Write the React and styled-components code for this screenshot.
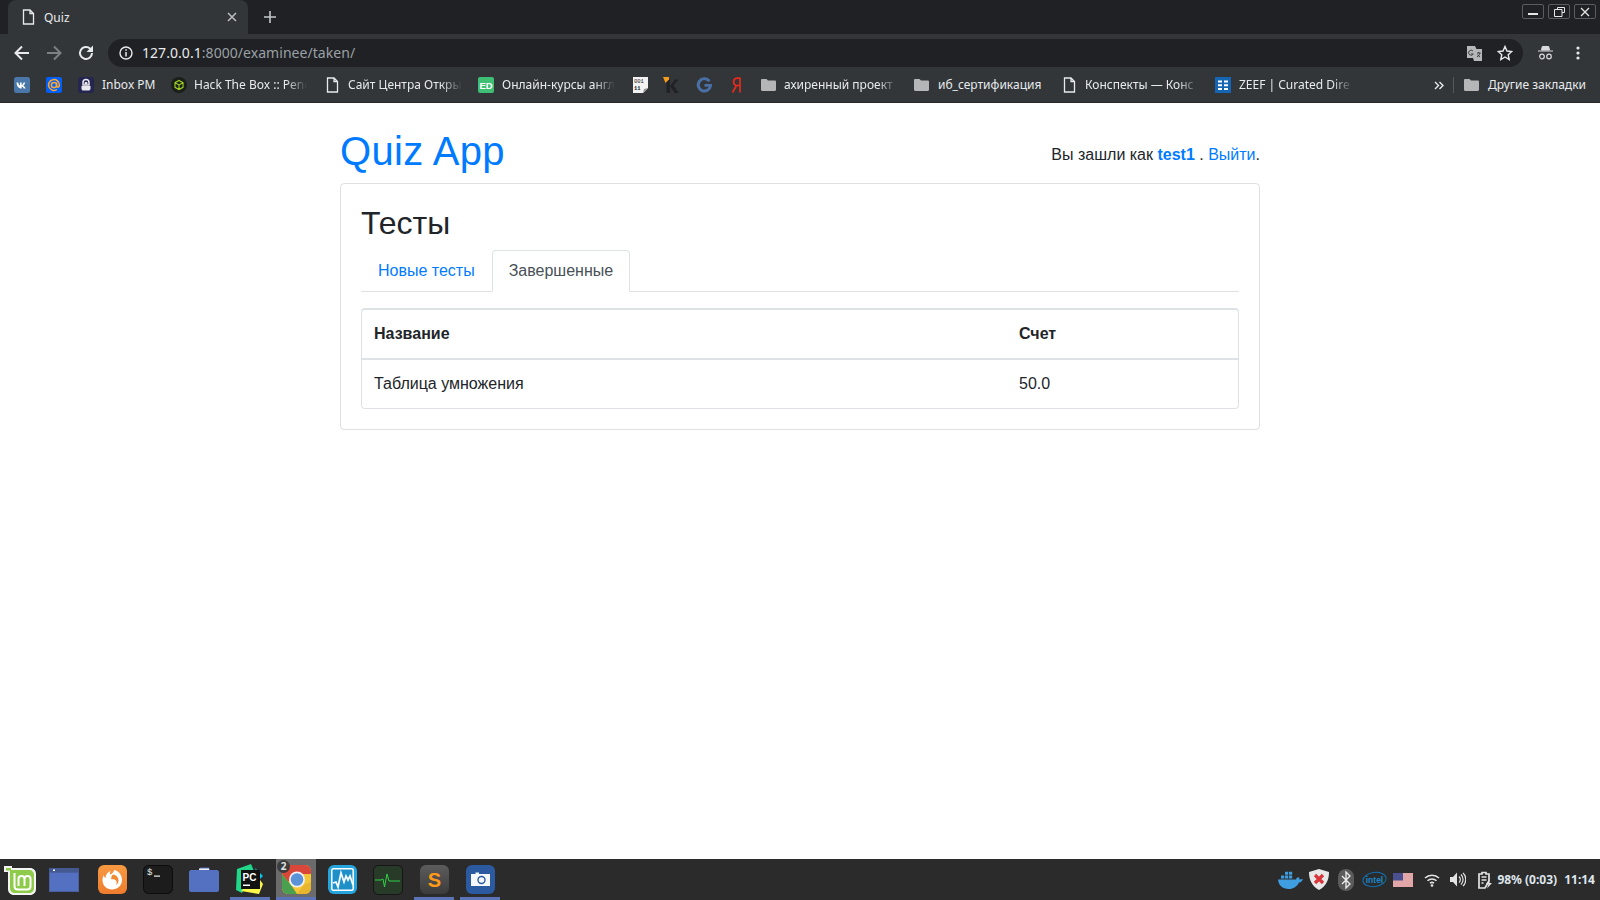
import React from "react";
import styled, { createGlobalStyle } from "styled-components";

const Global = createGlobalStyle`
  html, body { margin: 0; padding: 0; height: 100%; background: #fff; }
  #root { height: 100%; }
`;

const uiFont = `"Noto Sans", "Open Sans", sans-serif`;

const Screen = styled.div`
  width: 1600px;
  height: 900px;
  display: flex;
  flex-direction: column;
  overflow: hidden;
  font-family: "Liberation Sans", Arial, sans-serif;
`;

/* browser chrome */
const TabStrip = styled.div`
  height: 34px;
  background: #202124;
  display: flex;
  align-items: flex-end;
  padding-left: 8px;
  flex: none;
`;

const Tab = styled.div`
  width: 240px;
  height: 34px;
  box-sizing: border-box;
  background: #323639;
  border-radius: 8px 8px 0 0;
  display: flex;
  align-items: center;
  padding: 0 11px 0 14px;
  color: #e8eaed;
  font: 12px ${uiFont};
`;

const TabTitle = styled.span`
  flex: 1;
  margin-left: 9px;
`;

const NewTab = styled.div`
  margin: 0 0 1px 16px;
  height: 32px;
  display: flex;
  align-items: center;
`;

const WindowButtons = styled.div`
  margin-left: auto;
  display: flex;
  gap: 4px;
  padding: 4px 4px 0 0;
  align-self: flex-start;
`;

const WinBtn = styled.div`
  width: 22px;
  height: 15px;
  box-sizing: border-box;
  border: 1px solid #5a5d60;
  border-radius: 2px;
  display: flex;
  align-items: center;
  justify-content: center;
`;

const Toolbar = styled.div`
  height: 34px;
  flex: none;
  box-sizing: border-box;
  background: #323639;
  display: flex;
  align-items: center;
  padding: 5px 0 1px 13px;
`;

const NavIcon = styled.div`
  width: 18px;
  height: 18px;
  margin-right: 14px;
  display: flex;
`;

const Omnibox = styled.div`
  width: 1415px;
  margin-left: -1px;
  height: 28px;
  box-sizing: border-box;
  border-radius: 14px;
  background: #202124;
  display: flex;
  align-items: center;
  padding: 0 10px 0 11px;
  font: 14px ${uiFont};
  color: #9aa0a6;
`;

const Url = styled.span`
  margin: -2px 0 0 9px;
  letter-spacing: 0.05px;
`;

const UrlHost = styled.span`
  color: #e8eaed;
`;

const OmniEnd = styled.div`
  margin-left: auto;
  display: flex;
  gap: 15px;
  align-items: center;
`;

const ToolEnd = styled.div`
  display: flex;
  align-items: center;
  gap: 23px;
  margin-left: 15px;
`;

const Bookmarks = styled.div`
  height: 35px;
  flex: none;
  background: #323639;
  border-bottom: 1px solid #26282a;
  box-sizing: border-box;
  display: flex;
  align-items: center;
  padding-left: 14px;
  font: 12px ${uiFont};
  color: #e8eaed;
  svg {
    flex: none;
  }
`;

const Mark = styled.div`
  flex: none;
  width: ${(p) => p.$w}px;
  display: flex;
  align-items: center;
  white-space: nowrap;
`;

const MarkLabel = styled.span`
  flex: none;
  margin: -2px 0 0 ${(p) => p.$gap}px;
  width: ${(p) => p.$tw}px;
  ${(p) =>
    p.$fade &&
    `-webkit-mask-image: linear-gradient(to right, #000 82%, transparent 100%);`}
`;

const MarkDivider = styled.div`
  width: 1px;
  height: 16px;
  background: #55585b;
  margin: 0 10px 0 9px;
`;

/* page */
const Page = styled.main`
  flex: 1;
  background: #fff;
  color: #212529;
  font-size: 16px;
  line-height: 24px;
`;

const Container = styled.div`
  width: 920px;
  margin: 0 auto;
`;

const Header = styled.header`
  display: flex;
  justify-content: space-between;
  align-items: center;
  padding-top: 24px;
  margin-bottom: 8px;
`;

const Brand = styled.a`
  font-size: 40px;
  line-height: 48px;
  letter-spacing: 0.3px;
  color: #007bff;
  text-decoration: none;
`;

const Who = styled.div`
  padding-top: 8px;
`;

const Link = styled.a`
  color: #007bff;
  text-decoration: none;
  font-weight: ${(p) => (p.$bold ? 700 : 400)};
`;

const Card = styled.section`
  border: 1px solid rgba(0, 0, 0, 0.125);
  border-radius: 4px;
  padding: 20px;
`;

const CardTitle = styled.h2`
  margin: 0 0 8px;
  font-size: 32px;
  line-height: 38.4px;
  font-weight: 500;
`;

const Tabs = styled.nav`
  display: flex;
  border-bottom: 1px solid #dee2e6;
  height: 42px;
  box-sizing: border-box;
`;

const TabLink = styled.a`
  padding: 8px 16px;
  height: 42px;
  box-sizing: border-box;
  border: 1px solid ${(p) => (p.$active ? "#dee2e6" : "transparent")};
  border-bottom-color: ${(p) => (p.$active ? "#fff" : "transparent")};
  border-radius: 4px 4px 0 0;
  color: ${(p) => (p.$active ? "#495057" : "#007bff")};
  background: ${(p) => (p.$active ? "#fff" : "transparent")};
  text-decoration: none;
`;

const TableWrap = styled.div`
  margin-top: 16px;
  border: 1px solid #dee2e6;
  border-top-width: 2px;
  border-radius: 4px;
`;

const Table = styled.table`
  width: 100%;
  border-collapse: collapse;
  table-layout: fixed;
`;

const Th = styled.th`
  text-align: left;
  padding: 12px;
  border-bottom: 2px solid #dee2e6;
  width: ${(p) => p.$w || "auto"};
`;

const Td = styled.td`
  padding: 12px;
`;

/* desktop panel */
const Panel = styled.footer`
  height: 41px;
  flex: none;
  background: #2b2b2b;
  display: flex;
  align-items: stretch;
`;

const Launcher = styled.div`
  flex: none;
  width: 40px;
  margin-right: ${(p) => p.$mr ?? 6}px;
  display: flex;
  align-items: center;
  justify-content: center;
  box-sizing: border-box;
  border-bottom: 3px solid ${(p) => (p.$open ? "#5b74b8" : "transparent")};
  padding-top: 3px;
  background: ${(p) => (p.$current ? "#6b6b6b" : "transparent")};
  position: relative;
`;

const Badge = styled.span`
  position: absolute;
  left: 1px;
  top: 1px;
  width: 13px;
  height: 13px;
  border-radius: 50%;
  background: #3b3b3b;
  color: #dfe3e8;
  font: 700 10px/13px ${uiFont};
  text-align: center;
`;

const Tray = styled.div`
  margin-left: auto;
  display: flex;
  align-items: center;
  color: #dfe6ec;
  font: 700 12px ${uiFont};
  padding-right: 5px;
`;

const TrayIcon = styled.div`
  display: flex;
  margin-right: ${(p) => p.$mr}px;
`;

const Clock = styled.span`
  margin-left: 7px;
`;

/* icons */
const Doc = ({ c = "#e8eaed" }) => (
  <svg width="13" height="16" viewBox="0 0 13 16">
    <path d="M1.500 1h6.500l3.500 3.500V15h-10z M8 1v3.500h3.500" fill="none" stroke={c} strokeWidth="1.300" />
  </svg>
);

const Folder = () => (
  <svg width="15" height="12" viewBox="0 0 15 12">
    <path d="M1.200 0h4.300l1.500 1.600h6.800c.7 0 1.200.5 1.200 1.200v8c0 .7-.5 1.200-1.200 1.200H1.200C.5 12 0 11.500 0 10.800V1.200C0 .5.500 0 1.200 0z" fill="#b4b6b8" />
  </svg>
);

const Vk = () => (
  <svg width="16" height="16" viewBox="0 0 16 16">
    <rect width="16" height="16" rx="2.500" fill="#4a76a8" />
    <path d="M2.500 5.500h1.800c.3 1.600 1 2.900 1.700 3.100V5.500h1.700v2.600c.8-.1 1.500-1.200 1.800-2.600h1.700c-.3 1.600-1.200 2.700-1.900 3.200.8.400 1.800 1.300 2.300 2.800h-1.900c-.4-1.100-1.100-1.900-2-2v2h-.5C4.700 11.500 2.700 9.300 2.500 5.500z" fill="#fff" />
  </svg>
);

const Mail = () => (
  <svg width="16" height="16" viewBox="0 0 16 16">
    <rect width="16" height="16" rx="2" fill="#005ff9" />
    <circle cx="8" cy="8" r="2.600" fill="none" stroke="#ffa930" strokeWidth="1.500" />
    <path d="M10.600 5.500v3.400c0 1.800 2.800 1.800 2.800-.9A5.400 5.400 0 1 0 11 12.500" fill="none" stroke="#ffa930" strokeWidth="1.500" />
  </svg>
);

const InboxPm = () => (
  <svg width="16" height="16" viewBox="0 0 16 16">
    <rect width="16" height="16" rx="3" fill="#24264f" />
    <path d="M5 8V5.500a3 3 0 0 1 6 0V8z" fill="none" stroke="#e8e8ee" strokeWidth="1.500" />
    <rect x="6.500" y="5" width="3" height="2.500" rx="1" fill="#e8e8ee" />
    <path d="M3.500 9h9v3l-1 1.500h-7l-1-1.500z" fill="#e8e8ee" />
  </svg>
);

const Htb = () => (
  <svg width="16" height="16" viewBox="0 0 16 16">
    <circle cx="8" cy="8" r="8" fill="#1a1f1c" />
    <path d="M8 3.500l4 2.200v4.600l-4 2.200-4-2.200V5.700z M4 5.700l4 2.200 4-2.200 M8 7.900v4.600" fill="none" stroke="#9fd321" strokeWidth="1.100" />
  </svg>
);

const Ed = () => (
  <svg width="16" height="16" viewBox="0 0 16 16">
    <rect width="16" height="16" rx="2" fill="#3fbf75" />
    <text x="8" y="12" textAnchor="middle" fontSize="9.500" fontWeight="700" fontFamily="Liberation Sans" fill="#fff">ED</text>
  </svg>
);

const Binary = () => (
  <svg width="15" height="16" viewBox="0 0 15 16">
    <path d="M0 0h15v11l-5 5H0z" fill="#f2f2f2" />
    <path d="M10 16l1-4 4-1z" fill="#999" />
    <text x="1" y="6" fontSize="5.500" fontFamily="Liberation Mono" fill="#222">001</text>
    <text x="1" y="13" fontSize="5.500" fontWeight="700" fontFamily="Liberation Mono" fill="#222">11</text>
  </svg>
);

const KLogo = () => (
  <svg width="16" height="16" viewBox="0 0 16 16">
    <path d="M3.500 2.500h3.500V16H3.500z M7 9l5-6.500h3.500L10.500 8.500 16 16h-4.500z" fill="#202225" />
    <path d="M0 0h6v2.500L2.500 6z" fill="#f39c1f" />
  </svg>
);

const GLogo = () => (
  <svg width="17" height="16" viewBox="0 0 17 16">
    <path d="M14.500 3.200A7.700 7.700 0 1 0 16 8.800V7H8.500v2.800h4.300A4.700 4.700 0 1 1 12.500 5.300z" fill="#4a6fa5" />
  </svg>
);

const Ya = () => (
  <svg width="10" height="16" viewBox="0 0 10 16">
    <path d="M9 0.500v15M9 1.200H6a3.700 3.700 0 0 0-.5 7.300L1.500 15.500M9 8.500H5.500" fill="none" stroke="#e8291c" strokeWidth="1.700" />
  </svg>
);

const Zeef = () => (
  <svg width="16" height="16" viewBox="0 0 16 16">
    <rect width="16" height="16" fill="#1565b5" />
    <path d="M3 3.500h4v2H3zM9 3.500h4v2H9zM3 7.200h4v2H3zM9 7.200h4v2H9zM3 10.900h4v2H3zM9 10.900h4v2H9z" fill="#fff" />
  </svg>
);

const Mint = () => (
  <svg width="32" height="30" viewBox="0 0 32 30">
    <path d="M0 1h8v2h18c3.500 0 6 2.500 6 6v15c0 3.500-2.500 6-6 6H10c-3.500 0-6-2.500-6-6V7H0z" fill="#f4f4f4" />
    <path d="M2 3h5v2h18c3 0 5 2 5 5v13c0 3-2 5-5 5H11c-3 0-5-2-5-5V5.500H2z" fill="#8fcb4a" />
    <path d="M10.500 8v13c0 2 1.500 3.500 3.500 3.500h9c2 0 3.500-1.500 3.500-3.500v-7c0-4-6-4-6 0v7M20.500 14c0-4-6-4-6 0v7" fill="none" stroke="#fff" strokeWidth="2" />
  </svg>
);

const WindowApp = () => (
  <svg width="30" height="24" viewBox="0 0 30 24">
    <rect width="30" height="24" fill="#5470c0" />
    <rect width="30" height="4.500" fill="#44598f" />
    <rect x="4" y="1.500" width="2" height="1.500" fill="#fff" />
    <rect x=".5" y="4.500" width="29" height="19" fill="none" stroke="#4a5f9f" />
  </svg>
);

const Firefox = () => (
  <svg width="29" height="29" viewBox="0 0 29 29">
    <defs>
      <linearGradient id="ffBg" x1="0" y1="0" x2="0" y2="1">
        <stop offset="0" stopColor="#f89a42" />
        <stop offset="1" stopColor="#ee7c2c" />
      </linearGradient>
    </defs>
    <rect width="29" height="29" rx="6" fill="url(#ffBg)" />
    <path d="M16 5c5 1 8 5 8 10 0 5.500-4.500 9.500-10 9.500S4.500 20.500 4.500 15c0-2 .5-3.500 1.500-5 0 1.500.5 2.500 1.500 3 0-3 2-6 5-7-1 1.500-1 3 0 3.500C14 9 16 7 16 5z" fill="#fff" />
    <path d="M15 9.500c3.500.5 5.500 3 5.500 6 0 2-1 3.500-2.500 4.500.5-1 1-2.500.3-4-.8-1.500-2.800-2-4.800-1.500-.7-1.700 0-3.700 1.500-5z" fill="#f08a33" />
  </svg>
);

const Terminal = () => (
  <svg width="30" height="29" viewBox="0 0 30 29">
    <rect x=".5" y=".5" width="29" height="28" rx="5" fill="#1c1c1c" stroke="#0c0c0c" />
    <text x="4" y="10" fontSize="9" fontFamily="Liberation Mono" fill="#eee">$</text>
    <rect x="11" y="10.500" width="6" height="1.200" fill="#eee" />
  </svg>
);

const FilesApp = () => (
  <svg width="30" height="25" viewBox="0 0 30 25">
    <path d="M2 3h8l1.500-2.500H20L21 3h7c1 0 2 1 2 2v18c0 1-1 2-2 2H2c-1 0-2-1-2-2V5c0-1 1-2 2-2z" fill="#5470c0" />
    <path d="M10 1.500h10V3H10z" fill="#f2f2f2" />
  </svg>
);

const PyCharm = () => (
  <svg width="30" height="31" viewBox="0 0 30 31">
    <path d="M2 5l14-5 3 7-12 22-6-3z" fill="#21d789" />
    <path d="M20 4l8 8-4 4z" fill="#07c3f2" />
    <path d="M6 27l18 3 4-10-6-8z" fill="#fcf84a" />
    <rect x="6" y="6" width="19" height="19" fill="#111" />
    <text x="7.500" y="16.500" fontSize="10" fontWeight="700" fontFamily="Liberation Sans" fill="#fff">PC</text>
    <rect x="8" y="20.500" width="7" height="1.500" fill="#fff" />
  </svg>
);

const ChromeApp = () => (
  <svg width="29" height="29" viewBox="0 0 29 29">
    <defs>
      <clipPath id="chromeClip">
        <rect width="29" height="29" rx="6" />
      </clipPath>
    </defs>
    <g clipPath="url(#chromeClip)">
      <rect width="29" height="29" fill="#f4c534" />
      <path d="M0 0h29v9H15L6 17 0 9z" fill="#d9463a" />
      <path d="M0 9l9 11 6 9H0z" fill="#4aa04f" />
      <path d="M15 29l7-9 7-3v12z" fill="#e8b52e" />
    </g>
    <circle cx="15" cy="14.500" r="8" fill="#f1f1f1" />
    <circle cx="15" cy="14.500" r="6.300" fill="#5b93d8" />
  </svg>
);

const SysMon = () => (
  <svg width="29" height="29" viewBox="0 0 29 29">
    <rect width="29" height="29" rx="6" fill="#24a5dd" />
    <rect x="3.800" y="3.800" width="21.400" height="21.400" rx="1.500" fill="#1f8fc8" stroke="#fff" strokeWidth="1.500" />
    <path d="M5 18l3-1 2 5 3-14 3 9 2-6 2 4 2-4 3 9" fill="none" stroke="#f3fbff" strokeWidth="1.800" />
  </svg>
);

const Activity = () => (
  <svg width="30" height="30" viewBox="0 0 30 30">
    <rect x=".5" y=".5" width="29" height="29" rx="5" fill="#283a28" stroke="#161616" />
    <path d="M2 15h6l2-1 1.500 8L14 9l2 7h11" fill="none" stroke="#30d14a" strokeWidth="1" />
  </svg>
);

const Sublime = () => (
  <svg width="29" height="29" viewBox="0 0 29 29">
    <defs>
      <linearGradient id="subBg" x1="0" y1="0" x2="0" y2="1">
        <stop offset="0" stopColor="#5c5c5c" />
        <stop offset="1" stopColor="#3c3c3c" />
      </linearGradient>
    </defs>
    <rect width="29" height="29" rx="6" fill="url(#subBg)" />
    <text x="14.500" y="22" textAnchor="middle" fontSize="20" fontWeight="700" fontFamily="Liberation Sans" fill="#ff9a16">S</text>
  </svg>
);

const Camera = () => (
  <svg width="29" height="29" viewBox="0 0 29 29">
    <rect width="29" height="29" rx="6" fill="#2c5aa0" />
    <path d="M5 9h4.500V7.500H13V9h11v12H5z" fill="#f4f7fb" />
    <circle cx="15.500" cy="15" r="3.500" fill="none" stroke="#2c5aa0" strokeWidth="1.400" />
  </svg>
);

const Docker = () => (
  <svg width="25" height="18" viewBox="0 0 25 18">
    <path d="M0 8.500h18c.5-2 2-2.500 3-2 .5.800.5 1.500.3 2 1.200 0 2.500-.2 3.700-.5-1 3-3 3.500-4 3.500-2 4-5.500 6.500-10 6.500C4 18 .5 14 0 8.500z" fill="#3e9ee0" />
    <path d="M3 4.500h3.200v3H3zM7 4.500h3.200v3H7zM11 4.500h3.200v3H11zM7 .8h3.200v3H7zM11 .8h3.200v3H11z" fill="#3e9ee0" />
  </svg>
);

const Shield = () => (
  <svg width="20" height="21" viewBox="0 0 20 21">
    <path d="M10 0l10 3c0 8-3 14-10 18C3 17 0 11 0 3z" fill="#e8e8e8" />
    <path d="M6 6l8 8M14 6l-8 8" stroke="#d8343a" strokeWidth="3.200" />
  </svg>
);

const Bluetooth = () => (
  <svg width="16" height="22" viewBox="0 0 16 22">
    <rect width="16" height="22" rx="8" fill="#5b5b5b" />
    <path d="M4 7l8 8-4 4V3l4 4-8 8" fill="none" stroke="#eee" strokeWidth="1.300" />
  </svg>
);

const Intel = () => (
  <svg width="25" height="17" viewBox="0 0 25 17">
    <ellipse cx="12.500" cy="8.500" rx="11.700" ry="7" fill="none" stroke="#1170b0" strokeWidth="1" transform="rotate(-8 12.500 8.500)" />
    <text x="12.500" y="11.500" textAnchor="middle" fontSize="8.500" fontFamily="Liberation Sans" fill="#1a86c8">intel</text>
  </svg>
);

const Flag = () => (
  <svg width="20" height="14" viewBox="0 0 20 14">
    <rect width="20" height="14" fill="#f2f2f2" />
    <path d="M0 1h20M0 3h20M0 5h20M0 7h20M0 9h20M0 11h20M0 13h20" stroke="#d15a5f" strokeWidth="1" />
    <rect width="10" height="7.500" fill="#4a4f8f" />
  </svg>
);

const Wifi = () => (
  <svg width="16" height="14" viewBox="0 0 16 14">
    <path d="M1 5a10 10 0 0 1 14 0M3.500 7.800a6.500 6.500 0 0 1 9 0M6 10.300a3 3 0 0 1 4 0" fill="none" stroke="#e4e4e4" strokeWidth="1.500" />
    <circle cx="8" cy="12.500" r="1.300" fill="#e4e4e4" />
  </svg>
);

const Volume = () => (
  <svg width="16" height="15" viewBox="0 0 16 15">
    <path d="M0 5h3l4-4.500v14L3 10H0z" fill="#e4e4e4" />
    <path d="M9 4.500a4 4 0 0 1 0 6M11 2.500a7 7 0 0 1 0 10M13 .8a9.500 9.500 0 0 1 0 13.400" fill="none" stroke="#e4e4e4" strokeWidth="1.200" />
  </svg>
);

const Battery = () => (
  <svg width="14" height="18" viewBox="0 0 14 18">
    <path d="M4 1.500h4v1.500h3v7l-4 7H1V3h3z" fill="none" stroke="#e4e4e4" strokeWidth="1.700" />
    <path d="M3.500 6h5M3.500 9h5M3.500 12h2" stroke="#e4e4e4" strokeWidth="1.300" />
    <path d="M11 9l-3 4h2.500L9 17.500l5-5.500h-2.500z" fill="#e4e4e4" />
  </svg>
);

const bookmarks = [
  { w: 32, icon: <Vk /> },
  { w: 32, icon: <Mail /> },
  { w: 93, icon: <InboxPm />, label: "Inbox PM", gap: 8, tw: 60 },
  { w: 155, icon: <Htb />, label: "Hack The Box :: Pene", gap: 7, tw: 113, fade: true },
  { w: 152, icon: <Doc />, label: "Сайт Центра Откры", gap: 9, tw: 114, fade: true },
  { w: 155, icon: <Ed />, label: "Онлайн-курсы англ", gap: 8, tw: 113, fade: true },
  { w: 30, icon: <Binary /> },
  { w: 33, icon: <KLogo /> },
  { w: 35, icon: <GLogo /> },
  { w: 30, icon: <Ya /> },
  { w: 153, icon: <Folder />, label: "ахиренный проект", gap: 8, tw: 114, fade: true },
  { w: 149, icon: <Folder />, label: "иб_сертификация", gap: 9, tw: 110 },
  { w: 152, icon: <Doc />, label: "Конспекты — Конс", gap: 9, tw: 114, fade: true },
  { w: 219, icon: <Zeef />, label: "ZEEF | Curated Dire", gap: 8, tw: 114, fade: true },
];

const launchers = [
  { el: <Mint />, mr: 4 },
  { el: <WindowApp />, mr: 8 },
  { el: <Firefox /> },
  { el: <Terminal /> },
  { el: <FilesApp /> },
  { el: <PyCharm />, open: true },
  { el: <ChromeApp />, open: true, current: true, badge: "2" },
  { el: <SysMon /> },
  { el: <Activity /> },
  { el: <Sublime />, open: true },
  { el: <Camera />, open: true },
];

const App = () => (
  <Screen>
    <Global />
    <TabStrip>
      <Tab>
        <Doc />
        <TabTitle>Quiz</TabTitle>
        <svg width="10" height="10" viewBox="0 0 10 10">
          <path d="M1 1l8 8M9 1l-8 8" stroke="#b8babc" strokeWidth="1.600" />
        </svg>
      </Tab>
      <NewTab>
        <svg width="12" height="12" viewBox="0 0 12 12">
          <path d="M6 0v12M0 6h12" stroke="#c4c7c9" strokeWidth="1.600" />
        </svg>
      </NewTab>
      <WindowButtons>
        <WinBtn>
          <svg width="10" height="10" viewBox="0 0 10 10">
            <path d="M0 7h10" stroke="#e6e6e6" strokeWidth="2" />
          </svg>
        </WinBtn>
        <WinBtn>
          <svg width="11" height="10" viewBox="0 0 11 10">
            <path d="M3.500 2.500V.5h7v5H8M.5 2.500h7.500v7H.5z" fill="none" stroke="#e6e6e6" />
          </svg>
        </WinBtn>
        <WinBtn>
          <svg width="10" height="10" viewBox="0 0 10 10">
            <path d="M1 1l8 8M9 1l-8 8" stroke="#e6e6e6" strokeWidth="1.300" />
          </svg>
        </WinBtn>
      </WindowButtons>
    </TabStrip>

    <Toolbar>
      <NavIcon>
        <svg width="18" height="18" viewBox="0 0 18 18">
          <path d="M16 9H3M9 2.500L2.500 9 9 15.500" fill="none" stroke="#e8eaed" strokeWidth="2" />
        </svg>
      </NavIcon>
      <NavIcon>
        <svg width="18" height="18" viewBox="0 0 18 18">
          <path d="M2 9h13M9 2.500L15.500 9 9 15.500" fill="none" stroke="#7d8083" strokeWidth="2" />
        </svg>
      </NavIcon>
      <NavIcon>
        <svg width="18" height="18" viewBox="0 0 18 18">
          <path d="M15 9a6 6 0 1 1-1.800-4.300L15 6.500" fill="none" stroke="#e8eaed" strokeWidth="2" />
          <path d="M16 1.500v6.500H9.500z" fill="#e8eaed" />
        </svg>
      </NavIcon>
      <Omnibox>
        <svg width="14" height="14" viewBox="0 0 14 14">
          <circle cx="7" cy="7" r="6" fill="none" stroke="#e8eaed" strokeWidth="1.400" />
          <path d="M7 6v4.500M7 3.300v1.500" stroke="#e8eaed" strokeWidth="1.500" />
        </svg>
        <Url>
          <UrlHost>127.0.0.1</UrlHost>:8000/examinee/taken/
        </Url>
        <OmniEnd>
          <svg width="15" height="15" viewBox="0 0 15 15">
            <path d="M0 0h8l1.500 3H15v12H7l-1-3H0z" fill="#b5b7b9" />
            <path d="M6 5a2.500 2.500 0 1 0 .3 3H4M10 7h3.500M11.700 6v1M13 7c-.5 2-1.500 3-3 4M10.500 8.500c.5 1 1.500 2 2.500 2.500" fill="none" stroke="#333" strokeWidth=".9" />
          </svg>
          <svg width="16" height="16" viewBox="0 0 16 16">
            <path d="M8 1.500l2 4.500 4.800.5-3.600 3.200 1 4.800L8 12l-4.200 2.500 1-4.800L1.200 6.500 6 6z" fill="none" stroke="#e8eaed" strokeWidth="1.400" />
          </svg>
        </OmniEnd>
      </Omnibox>
      <ToolEnd>
        <svg width="15" height="14" viewBox="0 0 15 14">
          <path d="M3.500 4l.8-3.500h6.400L11.500 4z M0 5h15" fill="#d8dadc" stroke="#d8dadc" />
          <circle cx="4" cy="10.500" r="2.300" fill="none" stroke="#d8dadc" strokeWidth="1.200" />
          <circle cx="11" cy="10.500" r="2.300" fill="none" stroke="#d8dadc" strokeWidth="1.200" />
        </svg>
        <svg width="4" height="14" viewBox="0 0 4 14">
          <circle cx="2" cy="2" r="1.600" fill="#e8eaed" />
          <circle cx="2" cy="7" r="1.600" fill="#e8eaed" />
          <circle cx="2" cy="12" r="1.600" fill="#e8eaed" />
        </svg>
      </ToolEnd>
    </Toolbar>

    <Bookmarks>
      {bookmarks.map((b, i) => (
        <Mark key={i} $w={b.w}>
          {b.icon}
          {b.label && (
            <MarkLabel $gap={b.gap} $tw={b.tw} $fade={b.fade}>
              {b.label}
            </MarkLabel>
          )}
        </Mark>
      ))}
      <svg width="10" height="9" viewBox="0 0 10 9">
        <path d="M1 1l3.500 3.500L1 8M5.500 1L9 4.500 5.500 8" fill="none" stroke="#e8eaed" strokeWidth="1.400" />
      </svg>
      <MarkDivider />
      <Mark $w={130}>
        <Folder />
        <MarkLabel $gap={9} $tw={105}>Другие закладки</MarkLabel>
      </Mark>
    </Bookmarks>

    <Page>
      <Container>
        <Header>
          <Brand href="#">Quiz App</Brand>
          <Who>
            Вы зашли как <Link $bold href="#">test1</Link> . <Link href="#">Выйти</Link>.
          </Who>
        </Header>
        <Card>
          <CardTitle>Тесты</CardTitle>
          <Tabs>
            <TabLink href="#">Новые тесты</TabLink>
            <TabLink $active href="#">Завершенные</TabLink>
          </Tabs>
          <TableWrap>
            <Table>
              <thead>
                <tr>
                  <Th $w="621px">Название</Th>
                  <Th>Счет</Th>
                </tr>
              </thead>
              <tbody>
                <tr>
                  <Td>Таблица умножения</Td>
                  <Td>50.0</Td>
                </tr>
              </tbody>
            </Table>
          </TableWrap>
        </Card>
      </Container>
    </Page>

    <Panel>
      {launchers.map((l, i) => (
        <Launcher key={i} $open={l.open} $current={l.current} $mr={l.mr}>
          {l.badge && <Badge>{l.badge}</Badge>}
          {l.el}
        </Launcher>
      ))}
      <Tray>
        <TrayIcon $mr={6}><Docker /></TrayIcon>
        <TrayIcon $mr={9}><Shield /></TrayIcon>
        <TrayIcon $mr={8}><Bluetooth /></TrayIcon>
        <TrayIcon $mr={6}><Intel /></TrayIcon>
        <TrayIcon $mr={11}><Flag /></TrayIcon>
        <TrayIcon $mr={10}><Wifi /></TrayIcon>
        <TrayIcon $mr={12}><Volume /></TrayIcon>
        <TrayIcon $mr={5}><Battery /></TrayIcon>
        98% (0:03)
        <Clock>11:14</Clock>
      </Tray>
    </Panel>
  </Screen>
);

export default App;
